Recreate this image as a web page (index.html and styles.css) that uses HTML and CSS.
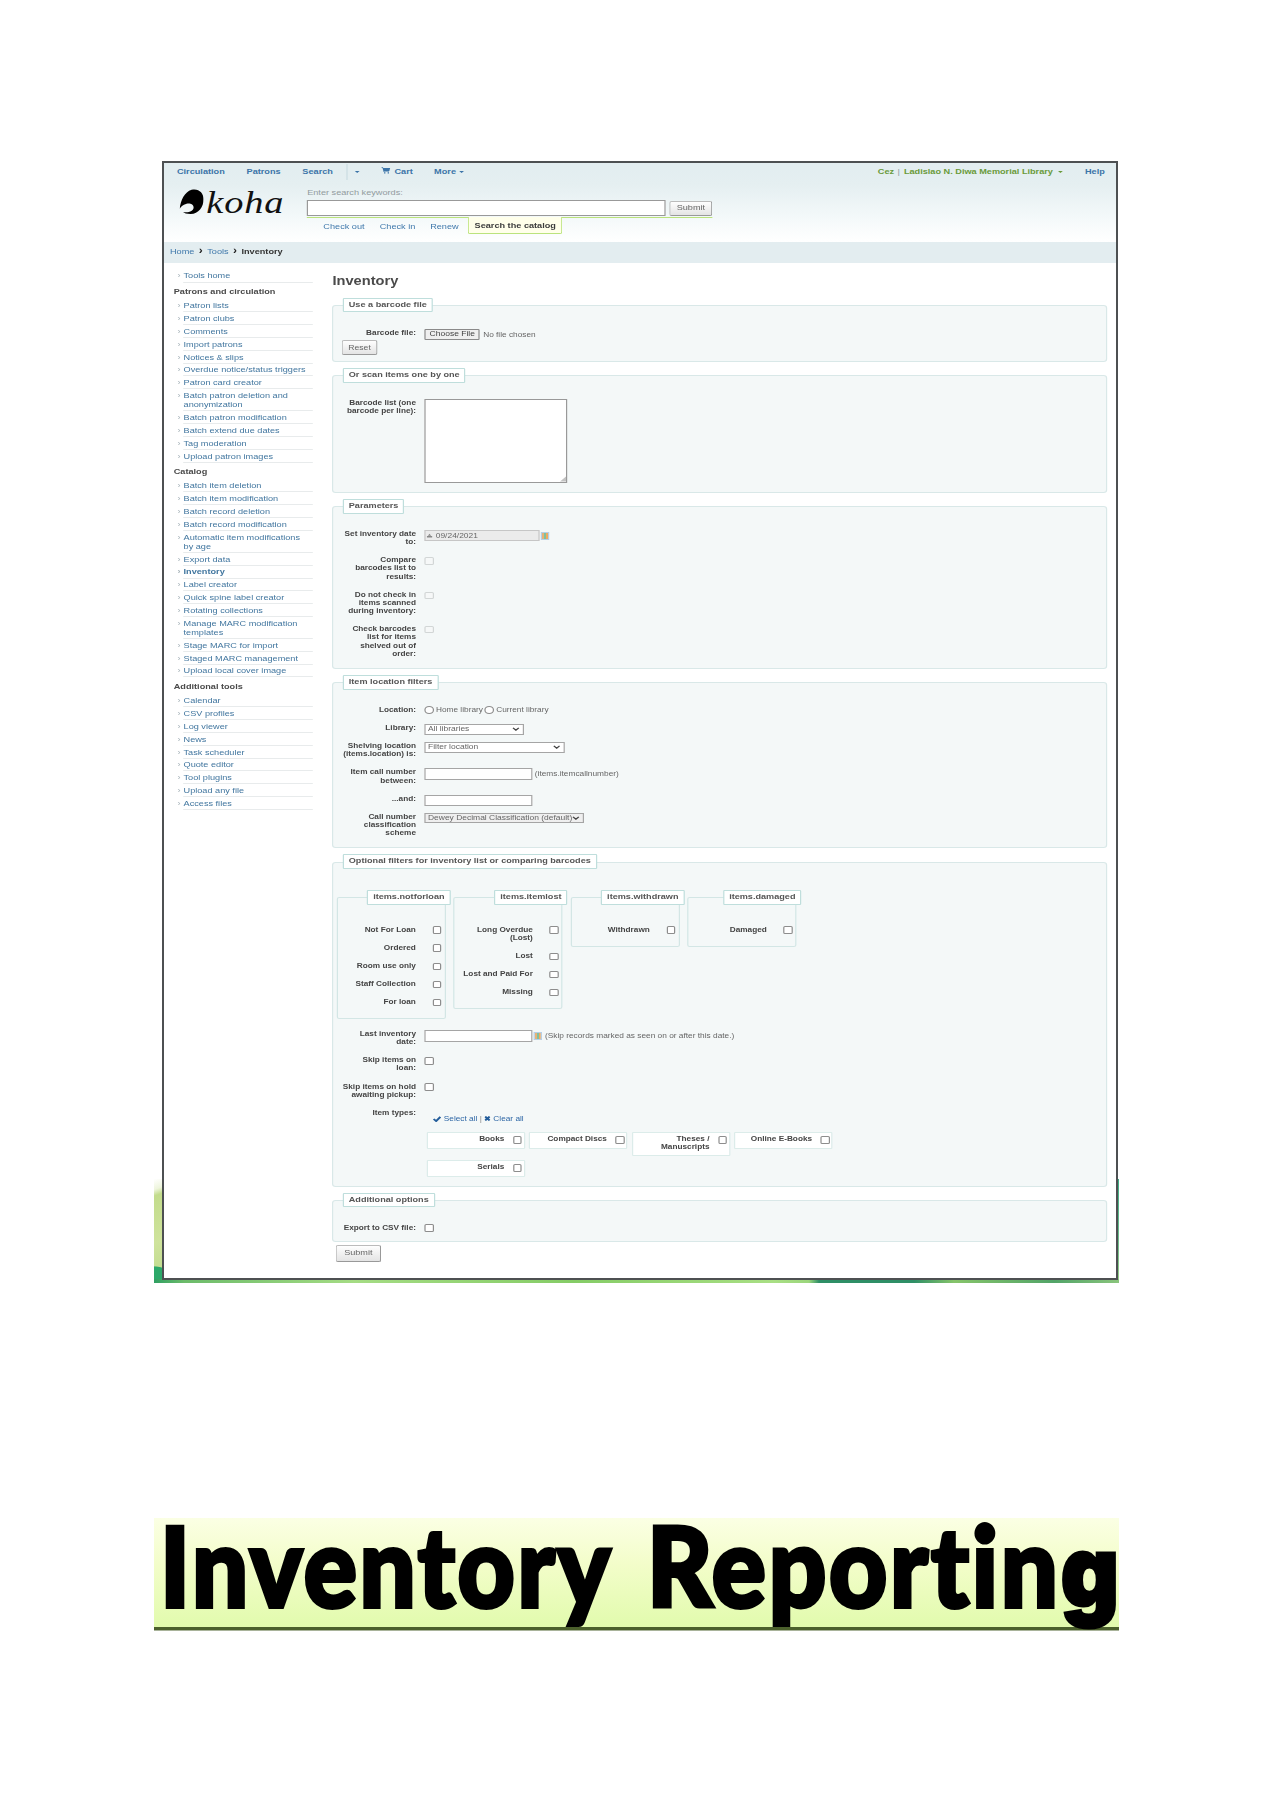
FILE: index.html
```html
<!DOCTYPE html>
<html lang="en">
<head>
<meta charset="utf-8">
<title>Inventory Reporting</title>
<link rel="stylesheet" href="styles.css">
</head>
<body>
<div class="slide">
<div class="frame">
<div class="screen">
  <header class="header">
    <nav class="topnav">
      <a class="n-circ">Circulation</a><a class="n-pat">Patrons</a><a class="n-search">Search</a><span class="split"><i class="caret"></i></span>
      <a class="n-cart"><svg class="cart" viewBox="0 0 16 14"><path d="M0 0h3l.6 2H16l-1.5 6.500H5.200l.3 1.300H14v1.200H4.300L2 1.300H0zM5 11.500h2.500V14H5zM11.500 11.500H14V14h-2.500z"/></svg>Cart</a>
      <a class="n-more">More <i class="caret"></i></a>
      <span class="user">Cez <b>|</b> Ladislao N. Diwa Memorial Library <i class="caret"></i></span><a class="n-help">Help</a>
    </nav>
    <div class="headrow">
      <div class="logo"><svg class="mark" viewBox="0 0 24 25" preserveAspectRatio="none"><path d="M0 20C1 11 5 3 12 .8C19-1 24 4 24 10C24 18 19 25 11 25C7 25 4.500 24 3.500 23C9 24 14 22 14 18.500C14 15 10 14 7 14.800C3 16 1 18 0 20z"/></svg><span>koha</span></div>
      <div class="search">
        <label>Enter search keywords:</label>
        <div class="searchline"><input class="q" type="text"><button class="btn sub">Submit</button></div>
        <div class="tabs"><a class="t1">Check out</a><a class="t2">Check in</a><a class="t3">Renew</a><b>Search the catalog</b></div>
      </div>
    </div>
  </header>
  <div class="crumbs"><a>Home</a><i>›</i><a>Tools</a><i>›</i><b>Inventory</b></div>
  <div class="body">
    <aside class="side">
      <ul><li>Tools home</li></ul>
      <h5>Patrons and circulation</h5>
      <ul><li>Patron lists</li><li>Patron clubs</li><li>Comments</li><li>Import patrons</li><li>Notices &amp; slips</li><li>Overdue notice/status triggers</li><li>Patron card creator</li><li>Batch patron deletion and<br>anonymization</li><li>Batch patron modification</li><li>Batch extend due dates</li><li>Tag moderation</li><li>Upload patron images</li></ul>
      <h5>Catalog</h5>
      <ul><li>Batch item deletion</li><li>Batch item modification</li><li>Batch record deletion</li><li>Batch record modification</li><li>Automatic item modifications<br>by age</li><li>Export data</li><li class="on">Inventory</li><li>Label creator</li><li>Quick spine label creator</li><li>Rotating collections</li><li>Manage MARC modification<br>templates</li><li>Stage MARC for import</li><li>Staged MARC management</li><li>Upload local cover image</li></ul>
      <h5>Additional tools</h5>
      <ul><li>Calendar</li><li>CSV profiles</li><li>Log viewer</li><li>News</li><li>Task scheduler</li><li>Quote editor</li><li>Tool plugins</li><li>Upload any file</li><li>Access files</li></ul>
    </aside>
    <main class="main">
      <h1>Inventory</h1>
      <section class="fs f1">
        <h4>Use a barcode file</h4>
        <div class="row"><label>Barcode file:</label><div class="ctl"><button class="choose">Choose File</button><span class="nofile">No file chosen</span></div></div>
        <button class="btn reset">Reset</button>
      </section>
      <section class="fs f2">
        <h4>Or scan items one by one</h4>
        <div class="row"><label>Barcode list (one<br>barcode per line):</label><div class="ctl"><div class="area"><svg viewBox="0 0 6 6"><path d="M6 0v6H0z"/></svg></div></div></div>
      </section>
      <section class="fs f3">
        <h4>Parameters</h4>
        <div class="row"><label>Set inventory date<br>to:</label><div class="ctl"><span class="date"><svg viewBox="0 0 8 8"><path d="M0 5h8v2.500H0zM1.500 4.500L4 1l2.500 3.500z"/></svg>09/24/2021</span><i class="cal"></i></div></div>
        <div class="row"><label>Compare<br>barcodes list to<br>results:</label><div class="ctl"><input type="checkbox" disabled></div></div>
        <div class="row"><label>Do not check in<br>items scanned<br>during inventory:</label><div class="ctl"><input type="checkbox" disabled></div></div>
        <div class="row"><label>Check barcodes<br>list for items<br>shelved out of<br>order:</label><div class="ctl"><input type="checkbox" disabled></div></div>
      </section>
      <section class="fs f4">
        <h4>Item location filters</h4>
        <div class="row"><label>Location:</label><div class="ctl mid"><input type="radio"><span class="rl">Home library</span><input type="radio"><span class="rl">Current library</span></div></div>
        <div class="row"><label>Library:</label><div class="ctl"><span class="sel s1">All libraries<svg viewBox="0 0 8 5"><path d="M1 1l3 3 3-3"/></svg></span></div></div>
        <div class="row"><label>Shelving location<br>(items.location) is:</label><div class="ctl"><span class="sel s2">Filter location<svg viewBox="0 0 8 5"><path d="M1 1l3 3 3-3"/></svg></span></div></div>
        <div class="row"><label>Item call number<br>between:</label><div class="ctl"><input class="txt" type="text"><span class="hint">(items.itemcallnumber)</span></div></div>
        <div class="row"><label>...and:</label><div class="ctl"><input class="txt" type="text"></div></div>
        <div class="row"><label>Call number<br>classification<br>scheme</label><div class="ctl"><span class="sel s3">Dewey Decimal Classification (default)<svg viewBox="0 0 8 5"><path d="M1 1l3 3 3-3"/></svg></span></div></div>
      </section>
      <section class="fs f5">
        <h4>Optional filters for inventory list or comparing barcodes</h4>
        <div class="groups">
          <div class="grp"><h4>items.notforloan</h4>
            <div class="row"><label>Not For Loan</label><input type="checkbox"></div>
            <div class="row"><label>Ordered</label><input type="checkbox"></div>
            <div class="row"><label>Room use only</label><input type="checkbox"></div>
            <div class="row"><label>Staff Collection</label><input type="checkbox"></div>
            <div class="row"><label>For loan</label><input type="checkbox"></div></div>
          <div class="grp"><h4>items.itemlost</h4>
            <div class="row"><label>Long Overdue<br>(Lost)</label><input type="checkbox"></div>
            <div class="row"><label>Lost</label><input type="checkbox"></div>
            <div class="row"><label>Lost and Paid For</label><input type="checkbox"></div>
            <div class="row"><label>Missing</label><input type="checkbox"></div></div>
          <div class="grp"><h4>items.withdrawn</h4>
            <div class="row"><label>Withdrawn</label><input type="checkbox"></div></div>
          <div class="grp"><h4>items.damaged</h4>
            <div class="row"><label>Damaged</label><input type="checkbox"></div></div>
        </div>
        <div class="row"><label>Last inventory<br>date:</label><div class="ctl"><input class="txt" type="text"><i class="cal"></i><span class="hint">(Skip records marked as seen on or after this date.)</span></div></div>
        <div class="row"><label>Skip items on<br>loan:</label><div class="ctl"><input type="checkbox"></div></div>
        <div class="row"><label>Skip items on hold<br>awaiting pickup:</label><div class="ctl"><input type="checkbox"></div></div>
        <div class="row types"><label>Item types:</label>
          <div>
            <div class="pick"><svg class="tick" viewBox="0 0 10 8"><path d="M1 4l3 3 5-6"/></svg><a>Select all</a><span>|</span><svg class="cross" viewBox="0 0 8 8"><path d="M1 1l6 6M7 1L1 7"/></svg><a>Clear all</a></div>
            <div class="cards">
              <div class="card"><label>Books</label><input type="checkbox"></div>
              <div class="card"><label>Compact Discs</label><input type="checkbox"></div>
              <div class="card"><label>Theses /<br>Manuscripts</label><input type="checkbox"></div>
              <div class="card"><label>Online E-Books</label><input type="checkbox"></div>
              <div class="card"><label>Serials</label><input type="checkbox"></div>
            </div>
          </div>
        </div>
      </section>
      <section class="fs f6">
        <h4>Additional options</h4>
        <div class="row"><label>Export to CSV file:</label><div class="ctl"><input type="checkbox"></div></div>
      </section>
      <button class="btn final">Submit</button>
    </main>
  </div>
</div>
</div>
</div>
<div class="banner">
  <svg width="965" height="113" viewBox="0 0 965 113">
    <text x="6" y="89" textLength="453" lengthAdjust="spacingAndGlyphs">Inventory</text>
    <text x="493" y="89" textLength="472" lengthAdjust="spacingAndGlyphs">Reportin<tspan class="g">g</tspan></text>
  </svg>
</div>
</body>
</html>
```

FILE: styles.css
```css
* { box-sizing: border-box; }
body { margin: 0; width: 1272px; height: 1800px; background: #fff; padding: 161px 0 0 154px; font-family: "Liberation Sans", Arial, sans-serif; overflow: hidden; }
i { font-style: normal; }
h1, h4, h5, ul { margin: 0; padding: 0; }

.slide {
  width: 965px; height: 1122px; padding-left: 8px;
  background:
    linear-gradient(90deg, #2f9f62 0, #6cbb6a 30px, #a5dc84 200px, #85cc66 420px, #a9df84 620px, #9bd67c 655px, #2f8f66 665px, #2f8f66 760px, #86c46a 800px, #52a468 900px, #8ac57c 965px) 0 100% / 100% 4px no-repeat,
    radial-gradient(ellipse 22px 17px at 0 100%, #2ca869 95%, transparent) 0 100% / 8px 17px no-repeat,
    linear-gradient(160deg, transparent 0, #eef5dc 10%, #c3dc8c 16%, #cfe39c 60%, #bcd98a 100%) 0 100% / 8px 104px no-repeat,
    linear-gradient(#3fae86 0, #5cb98c 35%, #74c08c 65%, #9bd088 100%) 100% 100% / 3px 104px no-repeat;
}
.frame { width: 956px; height: 1119px; border: 2px solid #4d5052; background: #fff; overflow: hidden; }
/* the captured window is wider than tall-scaled, so its content is stretched sideways */
.screen { width: 793.5px; height: 1115px; transform: scaleX(1.2); transform-origin: 0 0; font-size: 7.640px; line-height: 9.2px; color: #4a4a4a; }

.header { height: 79px; background: linear-gradient(#e2edf0 0, #e5eff1 28%, #f4f9fa 70%, #fff 100%); }
.topnav { height: 16px; padding-top: 1px; display: flex; align-items: center; font-weight: bold; color: #3c74a8; padding-left: 10.800px; }
.n-circ { width: 58px; }
.n-pat { width: 46.500px; }
.n-search { width: 37px; }
.split { border-left: 1px solid #cbdde2; height: 16px; display: flex; align-items: center; width: 28.800px; padding-left: 4.500px; }
.caret { display: inline-block; border: 2.200px solid transparent; border-top-color: currentColor; border-bottom: 0; vertical-align: 1px; margin-left: 1px; }
.cart { width: 7.500px; height: 6.500px; fill: currentColor; margin-right: 3.500px; }
.n-cart { width: 44px; }
.user { color: #6a9a3a; margin-left: auto; margin-right: 18.600px; white-space: pre; }
.user b { color: #8a9aa0; font-weight: normal; padding: 0 1.200px 0 .8px; }
.user .caret { margin-left: 2px; }
.n-help { margin-right: 9.500px; }
.headrow { display: flex; height: 63px; }
.logo { width: 119.300px; padding: 10px 0 0 13.300px; display: flex; }
.mark { width: 20px; height: 25px; fill: #000; }
.logo span { font: italic 32px/33px "Liberation Serif", serif; letter-spacing: .7px; color: #111; margin: -3px 0 0 2px; }
.search { width: 338px; padding-top: 8.500px; color: #929b9e; }
.search label { display: block; height: 12.500px; }
.searchline { display: flex; gap: 2.500px; height: 17px; align-items: flex-start; }
.q { width: 299.500px; height: 15.500px; border: 1px solid #999; background: #fff; padding: 0; }
.btn { font: 7.600px/10px "Liberation Sans", Arial, sans-serif; color: #666; background: linear-gradient(#fefefe, #e4e4e4); border: 1px solid #bbb; border-right-color: #999; border-bottom-color: #999; border-radius: 2px; padding: 0; display: block; }
.sub { width: 36.500px; height: 15px; margin-top: .5px; }
.tabs { border-top: 1px solid #bbe37c; height: 17px; display: flex; color: #3f78ab; line-height: 17px; }
.t1 { margin-left: 13.500px; width: 47px; }
.t2 { width: 42px; }
.t3 { width: 31px; }
.tabs b { color: #3c3c3c; background: #ffffea; border: 1px solid #bbe37c; border-top: 0; border-radius: 0 0 2px 2px; padding: 0 5px; height: 17px; line-height: 18px; margin-top: -1px; width: 79.500px; white-space: nowrap; }
.crumbs { height: 20.500px; background: #e3edf0; display: flex; padding-left: 5px; line-height: 19.500px; color: #3f78ab; }
.crumbs i { color: #222; font-weight: bold; width: 10.700px; text-align: center; font-size: 10px; line-height: 18px; }
.crumbs b { color: #333; }

.body { display: flex; }
.side { width: 140.400px; padding: 7.200px 16.900px 0 8.100px; }
.side ul { list-style: none; margin-left: 8.200px; color: #41769f; }
.side li { min-height: 12.820px; padding: 1.800px 0 .8px; border-bottom: 1px solid #e8ebec; position: relative; white-space: nowrap; }
.side li::before { content: "›"; position: absolute; left: -5px; color: #a8b4ba; }
.side li.on { font-weight: bold; }
.side h5 { font-size: 7.640px; line-height: 9.200px; height: 17.100px; padding-top: 4.800px; }

.main { width: 645.500px; color: #666; }
h1 { font-size: 12.200px; line-height: 15px; height: 42px; padding-top: 11px; color: #4a4a4a; }
.fs { border: 1px solid #d9e8e8; background: #f4f8f8; border-radius: 3px; margin-bottom: 13.500px; }
h4 { font-size: 7.600px; line-height: 12px; height: 14.500px; width: fit-content; background: #fff; border: 1px solid #bfdedc; border-radius: 1px; padding: 0 4px; margin: -8px 0 16.500px 7.600px; color: #555; white-space: nowrap; }
.f1 { height: 57px; }
.f2 { height: 117.500px; }
.f3 { height: 162.500px; }
.f4 { height: 166px; }
.f5 { height: 325.500px; margin-bottom: 12.500px; }
.f5 > h4 { margin-top: -8.500px; }
.f6 { height: 42px; }
.row { display: flex; padding-bottom: 9.850px; font-size: 6.860px; line-height: 8.200px; }
.row label { width: 68.600px; margin-left: 0; text-align: right; font-weight: bold; color: #444; white-space: nowrap; flex: none; }
.ctl { margin-left: 7px; height: 8.200px; display: flex; align-items: flex-start; white-space: nowrap; }
input[type=checkbox], input[type=radio] { appearance: none; width: 7.800px; height: 7.500px; border: 1px solid #8d8d8d; border-radius: 1.500px; background: #fff; margin: .8px 0 0; flex: none; }
input[type=radio] { border-radius: 50%; }
input:disabled { border-color: #d2d6d6; background: #f6f8f8; }
.f1 .row { padding-bottom: 3px; height: 11.500px; }
.choose { font: 7.100px/9px "Liberation Sans", Arial, sans-serif; color: #444; background: #efefef; border: 1px solid #8a8a8a; border-radius: 1px; padding: 0; width: 46.500px; height: 11.500px; }
.nofile { margin: 2px 0 0 2.500px; font-size: 6.900px; }
.reset { width: 30.500px; height: 15px; margin-left: 6.300px; font-size: 7.200px; }
.area { width: 119px; height: 84px; background: #fff; border: 1px solid #999; display: flex; align-items: flex-end; justify-content: flex-end; }
.area svg { width: 5px; height: 6px; fill: #c3c3c3; }
.date { width: 96px; height: 10.500px; border: 1px solid #c6c6c6; background: #ebebeb; line-height: 9px; font-size: 7px; padding-left: 1.500px; }
.date svg { width: 4.500px; height: 5px; margin-right: 2.500px; fill: #888; }
.cal { width: 7.500px; height: 8px; margin: 1.500px 0 0 1px; border: 1px solid #b6cfe6; background: linear-gradient(90deg, #e7b277 40%, #7fc0a0 40% 65%, #efaa60 65%); }
.mid input { margin-top: .3px; }
.rl { margin: .3px 1.400px 0 1.900px; font-size: 6.900px; }
.sel { height: 10.500px; border: 1px solid #a5a5a5; background: #fff; line-height: 8.500px; font-size: 7.050px; padding: 0 2.500px 0 2px; display: flex; justify-content: space-between; align-items: center; }
.sel svg { width: 6.500px; height: 4px; fill: none; stroke: #444; stroke-width: 1.500; flex: none; }
.s1 { width: 83.500px; }
.s2 { width: 117px; }
.s3 { width: 133px; background: #efefef; }
.txt { width: 90px; height: 11.500px; border: 1px solid #a5a5a5; background: #fff; padding: 0; }
.hint { margin: 2px 0 0 2px; font-size: 6.930px; }
.groups { display: flex; gap: 6.600px; margin: 6.500px 0 0 2.500px; height: 145px; align-items: flex-start; padding-top: 12px; }
.grp { width: 90.900px; border: 1px solid #d3e6e5; border-radius: 2px; padding-bottom: 2px; }
.grp h4 { margin: -8px -5px 21px auto; }
.grp label { width: 65px; }
.grp .row input { margin-left: 13.800px; }
.pick { display: flex; align-items: center; height: 9px; margin: 5.500px 0 0 14px; color: #2d66a5; font-size: 6.900px; white-space: nowrap; }
.pick span { margin: 0 2px; color: #888; }
.tick { width: 7px; height: 6px; fill: none; stroke: #235d9b; stroke-width: 2.500; margin-right: 2.200px; }
.cross { width: 5px; height: 5px; fill: none; stroke: #235d9b; stroke-width: 3; margin-right: 2.500px; }
.cards { display: flex; flex-wrap: wrap; width: 345px; gap: 4px 3.500px; margin: 9px 0 0 8.600px; align-items: flex-start; }
.card { width: 82px; min-height: 15.700px; background: #fff; border: 1px solid #dcecea; border-radius: 1px; display: flex; padding: 1.800px 0 4px; }
.card label { width: 64px; }
.card input { margin-left: 7px; margin-top: 1px; }
.final { width: 37.500px; height: 17px; margin: -10.500px 0 0 2.800px; }

.banner { margin-top: 235px; width: 965px; height: 113px; background: linear-gradient(#fbffe4 0, #f3fdca 40%, #e2fbae 95%); }
.banner svg { display: block; background: linear-gradient(transparent 109px, #4b602c 109px 112px, #a9b39a 112px); overflow: hidden; }
.banner text { font: 900 111px Lato, "Liberation Sans", sans-serif; letter-spacing: 3px; fill: #000; stroke: #000; stroke-width: 4; }
.banner .g { font-family: Inter, sans-serif; font-size: 99px; letter-spacing: 0; stroke-width: 3; }
```
